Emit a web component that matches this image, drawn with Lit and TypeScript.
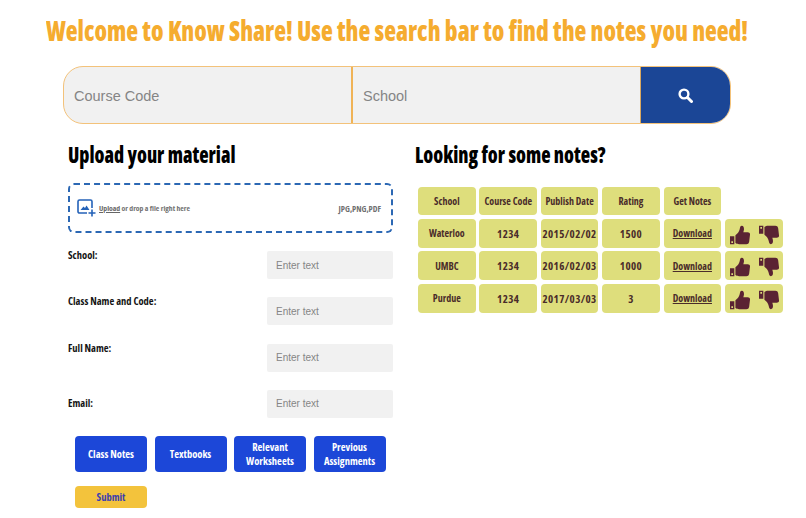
import { LitElement, html, css, svg } from "lit";
import { customElement } from "lit/decorators.js";

const thumbUp = svg`<path fill-rule="evenodd" d="M0 13.500h5.200V23H0zM1.600 19.500v2h2v-2zM6.500 12.200c2.400-1.600 4.400-4 5.200-7.400.3-1.500.6-3.800 2.500-3.800 2.400 0 2.900 3 2.400 5.400l-.6 2.400h5.300c1.800 0 2.900 1.200 2.700 2.800l-1 8.400c-.3 2-1.600 3-3.400 3H11c-1.800 0-3-.4-4.500-1.400z"/>`;

const rows = [
  ["Waterloo", "1234", "2015/02/02", "1500"],
  ["UMBC", "1234", "2016/02/03", "1000"],
  ["Purdue", "1234", "2017/03/03", "3"],
];

@customElement("app-root")
export class AppRoot extends LitElement {
  static styles = css`
    :host {
      display: block;
      width: 806px;
      height: 518px;
      overflow: hidden;
      background: #fff;
      font-family: "Open Sans", "Roboto Condensed", sans-serif;
      font-stretch: 75%;
    }
    .page { display: flex; flex-direction: column; padding-top: 11.500px; }
    h1 {
      margin: 0;
      padding-left: 46px;
      color: #f5ac2f;
      font-size: 24.400px;
      line-height: 36px;
      font-weight: 800;
      white-space: nowrap;
      transform: scaleY(1.180);
    }
    .search {
      margin: 18.500px 0 0 63px;
      width: 668px;
      height: 58px;
      box-sizing: border-box;
      display: grid;
      grid-template-columns: 287px 289px 1fr;
      border: 1px solid #f3c27a;
      border-radius: 20px;
      overflow: hidden;
      background: #f1f1f1;
    }
    .search input {
      border: 0;
      background: transparent;
      min-width: 0;
      padding: 1px 10px 0;
      font: 14.500px "Liberation Sans", sans-serif;
      outline: none;
    }
    .search input + input { border-left: 2px solid #f0b356; }
    .search input::placeholder { color: #858585; }
    .go {
      background: #1b4696;
      border-left: 1px solid #d9a860;
      display: flex;
      align-items: center;
      justify-content: center;
    }
    .columns { display: flex; margin-top: 17px; }
    .left { width: 325px; margin-left: 68px; flex: none; }
    .right { margin-left: 22px; flex: 1; }
    h2 {
      margin: 0;
      font-size: 19.300px;
      line-height: 28px;
      color: #000;
      font-weight: 800;
      white-space: nowrap;
      transform: scaleY(1.180);
    }
    .drop {
      margin-top: 14px;
      height: 50px;
      box-sizing: border-box;
      border: 2px dashed #2c68b4;
      border-radius: 6px;
      display: flex;
      align-items: center;
      padding: 0 8px 0 7px;
      font-size: 7.700px;
      font-weight: 700;
      color: #707070;
    }
    .drop svg { margin-right: 2px; flex: none; }
    .drop u { color: #666; }
    .drop .types { margin-left: auto; margin-right: 2px; font-size: 8.500px; }
    .form { margin-top: 18px; display: flex; flex-direction: column; gap: 18.300px; }
    .row { display: flex; justify-content: space-between; height: 28px; }
    .row label {
      font-size: 10.500px;
      line-height: 9px;
      font-weight: 700;
      color: #151515;
    }
    .row.mid { align-items: center; }
    .row input {
      width: 126px;
      height: 28px;
      box-sizing: border-box;
      border: 0;
      border-radius: 2px;
      background: #f1f1f1;
      padding: 0 9px;
      font: 10px "Liberation Sans", sans-serif;
    }
    .row input::placeholder { color: #858585; }
    .kinds { display: flex; gap: 7.500px; margin: 18px 0 0 7px; }
    .kinds div {
      width: 72px;
      height: 36px;
      box-sizing: border-box;
      border-radius: 4px;
      background: #1c47d8;
      color: #fff;
      font-size: 10.500px;
      line-height: 14px;
      font-weight: 700;
      display: flex;
      align-items: center;
      justify-content: center;
      text-align: center;
    }
    .submit {
      margin: 14px 0 0 7px;
      width: 72px;
      height: 22px;
      border-radius: 4px;
      background: #f3c33c;
      color: #3b3fb0;
      font-size: 10.500px;
      font-weight: 700;
      display: flex;
      align-items: center;
      justify-content: center;
    }
    .grid {
      margin: 17.500px 0 0 3px;
      display: grid;
      grid-template-columns: repeat(6, 57.700px);
      grid-auto-rows: 28.800px;
      gap: 3.700px;
    }
    .cell {
      background: #dede7c;
      border-radius: 4px;
      color: #4a2c2a;
      font-size: 10px;
      font-weight: 700;
      display: flex;
      align-items: center;
      justify-content: center;
      white-space: nowrap;
    }
    .cell.num { letter-spacing: .4px; font-size: 11px; }
    .cell a { color: inherit; text-decoration: underline; }
    .votes { justify-content: space-between; padding: 3px 4px 0 5px; box-sizing: border-box; }
    .votes svg { display: block; fill: #5a2333; }
    .down { transform: rotate(180deg) scaleX(-1); }
  `;

  private renderField(label: string, mid = false) {
    return html`<div class="row ${mid ? "mid" : ""}">
      <label>${label}</label><input placeholder="Enter text" />
    </div>`;
  }

  render() {
    return html`<div class="page">
      <h1>Welcome to Know Share! Use the search bar to find the notes you need!</h1>
      <div class="search">
        <input placeholder="Course Code" />
        <input placeholder="School" />
        <div class="go">
          <svg width="15" height="15" viewBox="0 0 15 15" fill="none" stroke="#fff">
            <circle cx="6" cy="6" r="4.400" stroke-width="2.400" />
            <path d="M9.500 9.500l4 4" stroke-width="3" stroke-linecap="round" />
          </svg>
        </div>
      </div>
      <div class="columns">
        <div class="left">
          <h2>Upload your material</h2>
          <div class="drop">
            <svg width="20" height="18" viewBox="0 0 20 18" fill="none">
              <path d="M10 14H2.500A1.500 1.500 0 0 1 1 12.500V2.500A1.500 1.500 0 0 1 2.500 1h11A1.500 1.500 0 0 1 15 2.500V9" stroke="#2462b8" stroke-width="1.600" />
              <path d="M3.500 11l3-3.500 1.500 1.500 1.500-2.500 3 4.500z" fill="#2462b8" />
              <path d="M15 10.500v7M11.500 14h7" stroke="#2462b8" stroke-width="1.600" />
            </svg>
            <span><u>Upload</u> or drop a file right here</span>
            <span class="types">JPG,PNG,PDF</span>
          </div>
          <div class="form">
            ${this.renderField("School:")}
            ${this.renderField("Class Name and Code:")}
            ${this.renderField("Full Name:")}
            ${this.renderField("Email:", true)}
          </div>
          <div class="kinds">
            <div>Class Notes</div>
            <div>Textbooks</div>
            <div>Relevant<br />Worksheets</div>
            <div>Previous<br />Assignments</div>
          </div>
          <div class="submit">Submit</div>
        </div>
        <div class="right">
          <h2>Looking for some notes?</h2>
          <div class="grid">
            ${["School", "Course Code", "Publish Date", "Rating", "Get Notes"].map(
              (h) => html`<div class="cell">${h}</div>`
            )}
            <div></div>
            ${rows.map(
              (r) => html`
                ${r.map((c, i) => html`<div class="cell ${i ? "num" : ""}">${c}</div>`)}
                <div class="cell"><a>Download</a></div>
                <div class="cell votes">
                  <svg width="20" height="20" viewBox="0 0 24 24">${thumbUp}</svg>
                  <svg class="down" width="20" height="20" viewBox="0 0 24 24">${thumbUp}</svg>
                </div>
              `
            )}
          </div>
        </div>
      </div>
    </div>`;
  }
}
